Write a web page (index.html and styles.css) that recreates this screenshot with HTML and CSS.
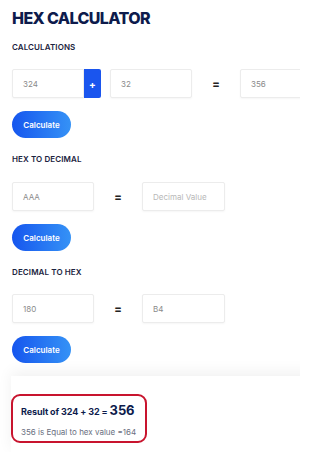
FILE: index.html
```html
<!DOCTYPE html>
<html>
<head>
<meta charset="utf-8">
<link rel="stylesheet" href="styles.css">
</head>
<body>
<div class="page">
  <h1 class="title">HEX CALCULATOR</h1>

  <section class="block">
    <h2 class="label">CALCULATIONS</h2>
    <div class="row">
      <div class="field w72">324</div>
      <div class="op">+</div>
      <div class="field w82 ml9">32</div>
      <div class="eq">=</div>
      <div class="field w60">356</div>
    </div>
    <button class="btn">Calculate</button>
  </section>

  <section class="block">
    <h2 class="label">HEX TO DECIMAL</h2>
    <div class="row">
      <div class="field w82">AAA</div>
      <div class="eq">=</div>
      <div class="field w83 placeholder">Decimal Value</div>
    </div>
    <button class="btn">Calculate</button>
  </section>

  <section class="block">
    <h2 class="label">DECIMAL TO HEX</h2>
    <div class="row">
      <div class="field w82">180</div>
      <div class="eq">=</div>
      <div class="field w83">B4</div>
    </div>
    <button class="btn">Calculate</button>
  </section>

  <div class="card">
    <div class="result">
      <p class="res-title">Result of 324 + 32 = <span class="big">356</span></p>
      <p class="res-text">356 is Equal to hex value =164</p>
    </div>
  </div>
</div>
</body>
</html>
```
FILE: styles.css
```css
* { box-sizing: border-box; }
html, body { margin: 0; padding: 0; background: #fff; width: 300px; height: 452px; overflow: hidden; }
body { font-family: Inter, "Noto Sans", sans-serif; color: #0e1a45; }
.page { padding: 0 0 0 12px; width: 300px; overflow: hidden; }
.title {
  margin: 0;
  padding-top: 9px;
  font-size: 16px;
  line-height: 18px;
  font-weight: 800;
  color: #0d1b4c;
  letter-spacing: -0.6px;
}
.block { margin: 0; }
.label {
  margin: 0;
  font-size: 8px;
  line-height: 10px;
  font-weight: 600;
  color: #1b2340;
  letter-spacing: 0.1px;
}
.block:first-of-type .label { margin-top: 15px; }
.block + .block .label { margin-top: 16px; }
.row {
  display: flex;
  align-items: center;
  margin-top: 17px;
  height: 29px;
}
.block + .block .row { margin-top: 18px; }
.block:last-of-type .row { margin-top: 17px; }
.field {
  height: 29px;
  border: 1px solid #ececec;
  border-radius: 2px;
  box-shadow: 0 1px 2px rgba(0,0,0,0.04);
  font-size: 8px;
  color: #8a8a8a;
  padding-left: 10px;
  display: flex;
  align-items: center;
  flex-shrink: 0;
  background: #fff;
}
.placeholder { color: #b8b8b8; }
.w72 { width: 72px; border-radius: 2px 0 0 2px; }
.w82 { width: 82px; }
.w83 { width: 83px; }
.w60 { width: 70px; }
.ml9 { margin-left: 9px; }
.op {
  width: 17px;
  height: 29px;
  background: #1a55ee;
  color: #fff;
  border-radius: 0 2px 2px 0;
  display: flex;
  align-items: center;
  justify-content: center;
  font-size: 10px;
  font-weight: 700;
  flex-shrink: 0;
}
.eq {
  width: 48px;
  text-align: center;
  font-size: 11px;
  font-weight: 800;
  color: #222;
  flex-shrink: 0;
}
.btn {
  display: block;
  margin-top: 13px;
  width: 59px;
  height: 27px;
  border: 0;
  border-radius: 14px;
  background: linear-gradient(90deg, #1656ee 0%, #3592f6 100%);
  color: #fff;
  font-family: Inter, "Noto Sans", sans-serif;
  font-size: 8px;
  font-weight: 600;
  padding: 0;
}
.card {
  margin-top: 13px;
  width: 310px;
  height: 76px;
  background: #fff;
  box-shadow: 0 -4px 14px rgba(0,0,0,0.06);
  padding: 18px 0 0 0;
  margin-left: -1px;
}
.result {
  width: 136px;
  height: 49px;
  border: 2px solid #c8142e;
  border-radius: 9px;
  padding: 7px 0 0 8px;
}
.res-title {
  margin: 0;
  font-size: 9px;
  line-height: 14px;
  font-weight: 700;
  color: #0d1b4c;
  letter-spacing: -0.1px;
}
.big { font-size: 13px; }
.res-text {
  margin: 8px 0 0 0;
  font-size: 8px;
  line-height: 10px;
  color: #6a6f80;
}
```
